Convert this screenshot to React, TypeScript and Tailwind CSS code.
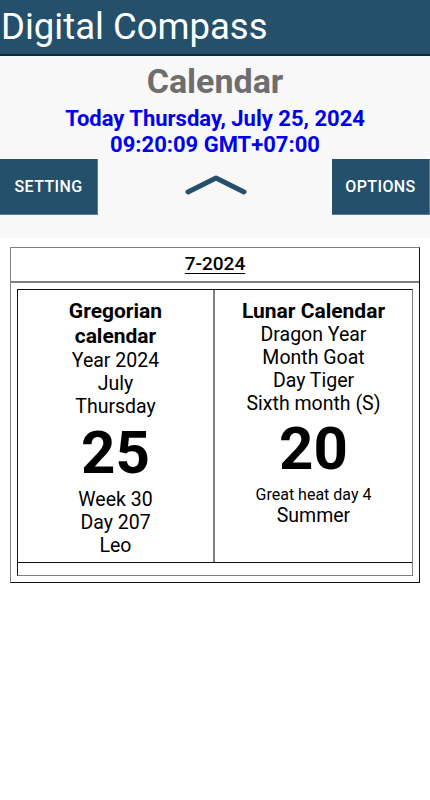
import React from 'react';

const leftLines = ['Year 2024', 'July', 'Thursday'];
const leftBottom = ['Week 30', 'Day 207', 'Leo'];
const rightLines = ['Dragon Year', 'Month Goat', 'Day Tiger', 'Sixth month (S)'];

const NavButton: React.FC<{ label: string }> = ({ label }) => (
  <button className="flex h-[56px] w-[98px] items-center justify-center border-r border-b border-[#5a7a90] bg-[#24506b] text-[16px] font-medium tracking-[0.4px] text-white">
    {label}
  </button>
);

const App: React.FC = () => {
  return (
    <div className="min-h-[800px] w-[430px] bg-white font-['Roboto',sans-serif] text-black">
      {/* Toolbar */}
      <div className="flex h-[56px] items-center border-b-2 border-[#0b2a44] bg-[#24506b] pl-[1px]">
        <h1 className="mt-[1px] text-[36.5px] leading-none text-white">Digital Compass</h1>
      </div>

      {/* Top panel */}
      <div className="flex flex-col items-center bg-[#f8f8f8] pt-[5px] pb-[23px]">
        <div className="text-[34px] leading-[40px] font-bold text-[#6e6e6e]">Calendar</div>
        <div className="mt-[5px] text-center text-[22px] leading-[26px] font-bold text-[#0000ee]">
          <div>Today Thursday, July 25, 2024</div>
          <div>09:20:09 GMT+07:00</div>
        </div>
        <div className="mt-[1px] flex w-full items-center justify-between">
          <NavButton label="SETTING" />
          <svg width="64" height="22" viewBox="0 0 64 22" className="ml-[2px] mb-[3px]">
            <path
              d="M4 17 L32 3 L60 17"
              fill="none"
              stroke="#24506b"
              strokeWidth="5"
              strokeLinecap="round"
              strokeLinejoin="round"
            />
          </svg>
          <NavButton label="OPTIONS" />
        </div>
      </div>

      {/* Calendar table */}
      <div className="mx-[10px] mt-[9px] border border-t-[#808080] border-l-[#808080] border-r-[#111] border-b-[#111]">
        <div className="flex h-[35px] items-center justify-center border-b-2 border-[#808080]">
          <span className="text-[19px] font-medium underline underline-offset-[3px]">7-2024</span>
        </div>
        <div className="p-[6px]">
          <div className="border border-t-[#111] border-l-[#111] border-r-[#808080] border-b-[#808080]">
            <div className="grid h-[272px] grid-cols-2">
              {/* Gregorian */}
              <div className="flex flex-col items-center border-r-2 border-[#808080] pt-[9px] text-center">
                <div className="text-[21px] leading-[25px] font-bold">Gregorian</div>
                <div className="text-[21px] leading-[25px] font-bold">calendar</div>
                {leftLines.map(l => (
                  <div key={l} className="text-[19.5px] leading-[23px]">{l}</div>
                ))}
                <div className="text-[60px] leading-[70px] font-bold">25</div>
                {leftBottom.map(l => (
                  <div key={l} className="text-[19.5px] leading-[23px]">{l}</div>
                ))}
              </div>

              {/* Lunar */}
              <div className="flex flex-col items-center pt-[9px] text-center">
                <div className="text-[21px] leading-[24px] font-bold">Lunar Calendar</div>
                {rightLines.map(l => (
                  <div key={l} className="text-[19.5px] leading-[23px]">{l}</div>
                ))}
                <div className="text-[60px] leading-[68px] font-bold">20</div>
                <div className="mt-[2px] text-[16px] leading-[19px]">Great heat day 4</div>
                <div className="text-[19.5px] leading-[23px]">Summer</div>
              </div>
            </div>
            <div className="h-[13px] border-t border-[#111]" />
          </div>
        </div>
      </div>
    </div>
  );
};

export default App;
